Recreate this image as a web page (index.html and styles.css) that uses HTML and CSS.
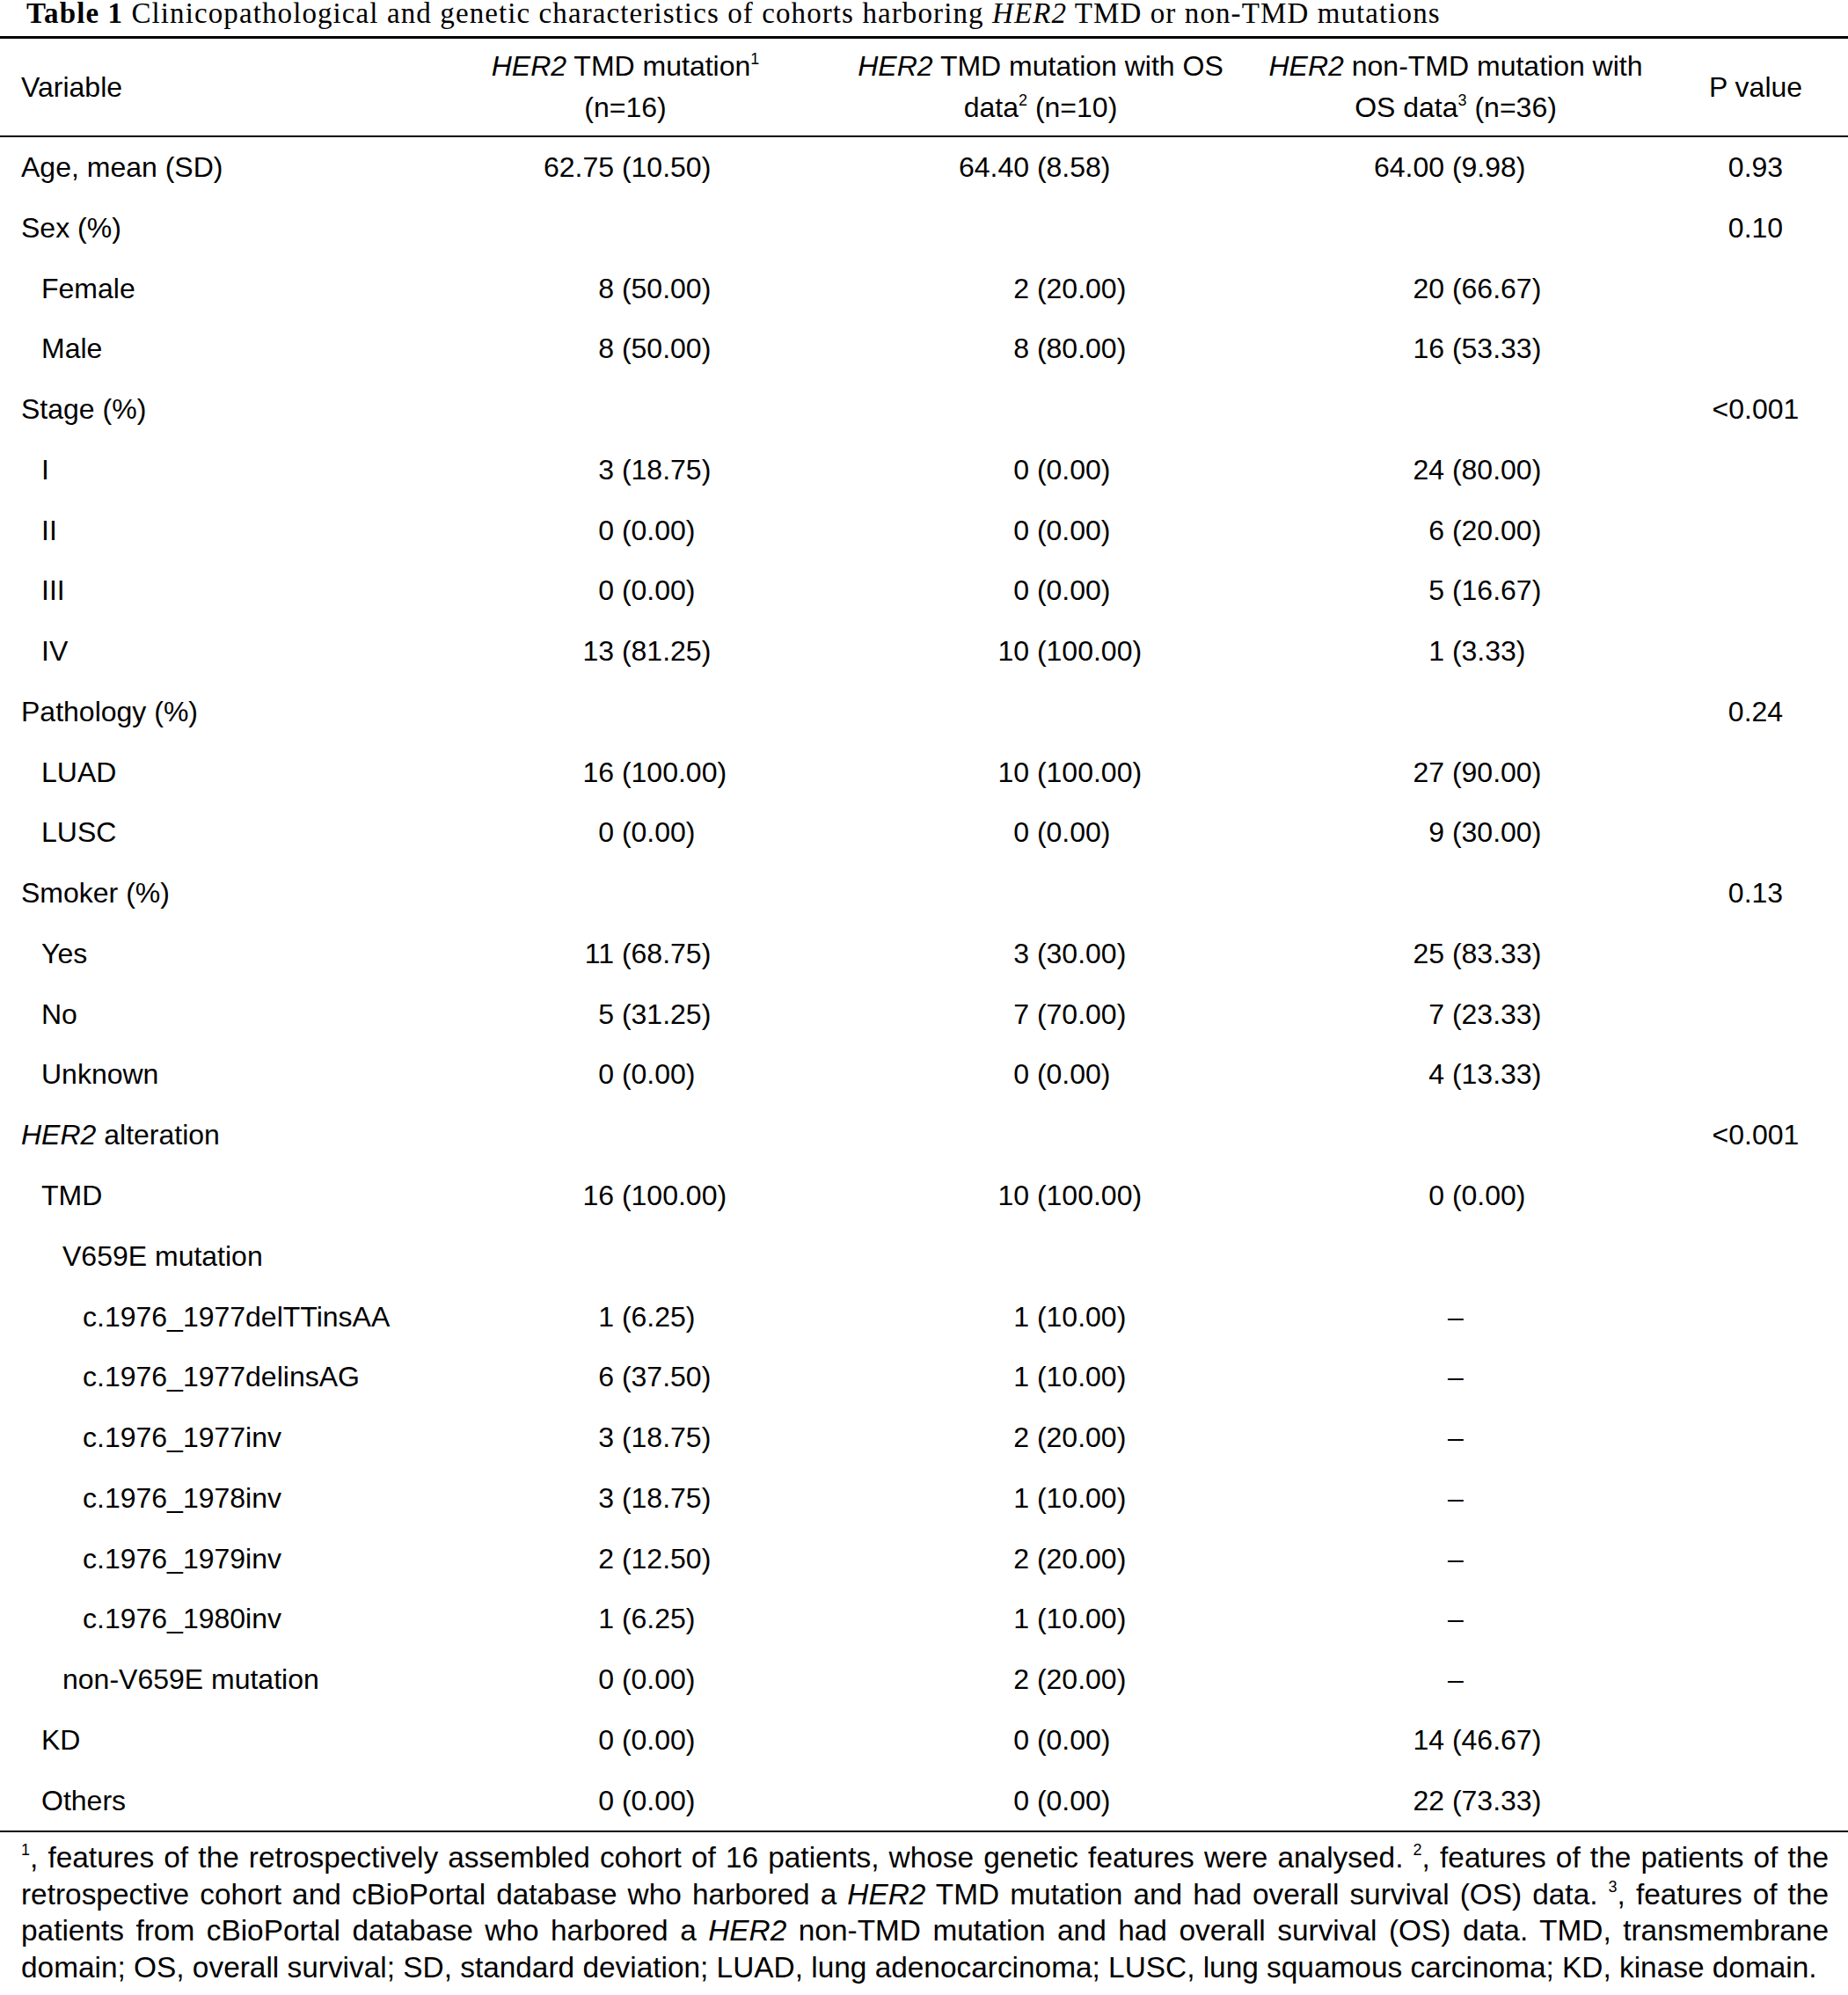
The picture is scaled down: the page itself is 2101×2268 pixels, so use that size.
FILE: index.html
```html
<!DOCTYPE html>
<html>
<head>
<meta charset="utf-8">
<link rel="stylesheet" href="styles.css">
</head>
<body>
<div class="page">
  <div class="title"><b>Table 1</b> Clinicopathological and genetic characteristics of cohorts harboring <i>HER2</i> TMD or non-TMD mutations</div>
  <div class="table">
    <div class="head">
      <div class="hc hvar">Variable</div>
      <div class="hc"><span><i>HER2</i> TMD mutation<sup>1</sup><br>(n=16)</span></div>
      <div class="hc"><span><i>HER2</i> TMD mutation with OS<br>data<sup>2</sup> (n=10)</span></div>
      <div class="hc"><span><i>HER2</i> non-TMD mutation with<br>OS data<sup>3</sup> (n=36)</span></div>
      <div class="hc"><span>P value</span></div>
    </div>
    <div class="body">
      <div class="row"><div class="lab l0">Age, mean (SD)</div><div class="val"><span class="n">62.75</span><span class="p">(10.50)</span></div><div class="val"><span class="n">64.40</span><span class="p">(8.58)</span></div><div class="val"><span class="n">64.00</span><span class="p">(9.98)</span></div><div class="pv">0.93</div></div>
      <div class="row"><div class="lab l0">Sex (%)</div><div class="val"></div><div class="val"></div><div class="val"></div><div class="pv">0.10</div></div>
      <div class="row"><div class="lab l1">Female</div><div class="val"><span class="n">8</span><span class="p">(50.00)</span></div><div class="val"><span class="n">2</span><span class="p">(20.00)</span></div><div class="val"><span class="n">20</span><span class="p">(66.67)</span></div><div class="pv"></div></div>
      <div class="row"><div class="lab l1">Male</div><div class="val"><span class="n">8</span><span class="p">(50.00)</span></div><div class="val"><span class="n">8</span><span class="p">(80.00)</span></div><div class="val"><span class="n">16</span><span class="p">(53.33)</span></div><div class="pv"></div></div>
      <div class="row"><div class="lab l0">Stage (%)</div><div class="val"></div><div class="val"></div><div class="val"></div><div class="pv">&lt;0.001</div></div>
      <div class="row"><div class="lab l1">I</div><div class="val"><span class="n">3</span><span class="p">(18.75)</span></div><div class="val"><span class="n">0</span><span class="p">(0.00)</span></div><div class="val"><span class="n">24</span><span class="p">(80.00)</span></div><div class="pv"></div></div>
      <div class="row"><div class="lab l1">II</div><div class="val"><span class="n">0</span><span class="p">(0.00)</span></div><div class="val"><span class="n">0</span><span class="p">(0.00)</span></div><div class="val"><span class="n">6</span><span class="p">(20.00)</span></div><div class="pv"></div></div>
      <div class="row"><div class="lab l1">III</div><div class="val"><span class="n">0</span><span class="p">(0.00)</span></div><div class="val"><span class="n">0</span><span class="p">(0.00)</span></div><div class="val"><span class="n">5</span><span class="p">(16.67)</span></div><div class="pv"></div></div>
      <div class="row"><div class="lab l1">IV</div><div class="val"><span class="n">13</span><span class="p">(81.25)</span></div><div class="val"><span class="n">10</span><span class="p">(100.00)</span></div><div class="val"><span class="n">1</span><span class="p">(3.33)</span></div><div class="pv"></div></div>
      <div class="row"><div class="lab l0">Pathology (%)</div><div class="val"></div><div class="val"></div><div class="val"></div><div class="pv">0.24</div></div>
      <div class="row"><div class="lab l1">LUAD</div><div class="val"><span class="n">16</span><span class="p">(100.00)</span></div><div class="val"><span class="n">10</span><span class="p">(100.00)</span></div><div class="val"><span class="n">27</span><span class="p">(90.00)</span></div><div class="pv"></div></div>
      <div class="row"><div class="lab l1">LUSC</div><div class="val"><span class="n">0</span><span class="p">(0.00)</span></div><div class="val"><span class="n">0</span><span class="p">(0.00)</span></div><div class="val"><span class="n">9</span><span class="p">(30.00)</span></div><div class="pv"></div></div>
      <div class="row"><div class="lab l0">Smoker (%)</div><div class="val"></div><div class="val"></div><div class="val"></div><div class="pv">0.13</div></div>
      <div class="row"><div class="lab l1">Yes</div><div class="val"><span class="n">11</span><span class="p">(68.75)</span></div><div class="val"><span class="n">3</span><span class="p">(30.00)</span></div><div class="val"><span class="n">25</span><span class="p">(83.33)</span></div><div class="pv"></div></div>
      <div class="row"><div class="lab l1">No</div><div class="val"><span class="n">5</span><span class="p">(31.25)</span></div><div class="val"><span class="n">7</span><span class="p">(70.00)</span></div><div class="val"><span class="n">7</span><span class="p">(23.33)</span></div><div class="pv"></div></div>
      <div class="row"><div class="lab l1">Unknown</div><div class="val"><span class="n">0</span><span class="p">(0.00)</span></div><div class="val"><span class="n">0</span><span class="p">(0.00)</span></div><div class="val"><span class="n">4</span><span class="p">(13.33)</span></div><div class="pv"></div></div>
      <div class="row"><div class="lab l0"><i>HER2</i> alteration</div><div class="val"></div><div class="val"></div><div class="val"></div><div class="pv">&lt;0.001</div></div>
      <div class="row"><div class="lab l1">TMD</div><div class="val"><span class="n">16</span><span class="p">(100.00)</span></div><div class="val"><span class="n">10</span><span class="p">(100.00)</span></div><div class="val"><span class="n">0</span><span class="p">(0.00)</span></div><div class="pv"></div></div>
      <div class="row"><div class="lab l2">V659E mutation</div><div class="val"></div><div class="val"></div><div class="val"></div><div class="pv"></div></div>
      <div class="row"><div class="lab l3">c.1976_1977delTTinsAA</div><div class="val"><span class="n">1</span><span class="p">(6.25)</span></div><div class="val"><span class="n">1</span><span class="p">(10.00)</span></div><div class="val dash">–</div><div class="pv"></div></div>
      <div class="row"><div class="lab l3">c.1976_1977delinsAG</div><div class="val"><span class="n">6</span><span class="p">(37.50)</span></div><div class="val"><span class="n">1</span><span class="p">(10.00)</span></div><div class="val dash">–</div><div class="pv"></div></div>
      <div class="row"><div class="lab l3">c.1976_1977inv</div><div class="val"><span class="n">3</span><span class="p">(18.75)</span></div><div class="val"><span class="n">2</span><span class="p">(20.00)</span></div><div class="val dash">–</div><div class="pv"></div></div>
      <div class="row"><div class="lab l3">c.1976_1978inv</div><div class="val"><span class="n">3</span><span class="p">(18.75)</span></div><div class="val"><span class="n">1</span><span class="p">(10.00)</span></div><div class="val dash">–</div><div class="pv"></div></div>
      <div class="row"><div class="lab l3">c.1976_1979inv</div><div class="val"><span class="n">2</span><span class="p">(12.50)</span></div><div class="val"><span class="n">2</span><span class="p">(20.00)</span></div><div class="val dash">–</div><div class="pv"></div></div>
      <div class="row"><div class="lab l3">c.1976_1980inv</div><div class="val"><span class="n">1</span><span class="p">(6.25)</span></div><div class="val"><span class="n">1</span><span class="p">(10.00)</span></div><div class="val dash">–</div><div class="pv"></div></div>
      <div class="row"><div class="lab l2">non-V659E mutation</div><div class="val"><span class="n">0</span><span class="p">(0.00)</span></div><div class="val"><span class="n">2</span><span class="p">(20.00)</span></div><div class="val dash">–</div><div class="pv"></div></div>
      <div class="row"><div class="lab l1">KD</div><div class="val"><span class="n">0</span><span class="p">(0.00)</span></div><div class="val"><span class="n">0</span><span class="p">(0.00)</span></div><div class="val"><span class="n">14</span><span class="p">(46.67)</span></div><div class="pv"></div></div>
      <div class="row"><div class="lab l1">Others</div><div class="val"><span class="n">0</span><span class="p">(0.00)</span></div><div class="val"><span class="n">0</span><span class="p">(0.00)</span></div><div class="val"><span class="n">22</span><span class="p">(73.33)</span></div><div class="pv"></div></div>
    </div>
  </div>
  <div class="notes">
    <span class="ln"><sup>1</sup>, features of the retrospectively assembled cohort of 16 patients, whose genetic features were analysed. <sup>2</sup>, features of the patients of the</span>
    <span class="ln">retrospective cohort and cBioPortal database who harbored a <i>HER2</i> TMD mutation and had overall survival (OS) data. <sup>3</sup>, features of the</span>
    <span class="ln">patients from cBioPortal database who harbored a <i>HER2</i> non-TMD mutation and had overall survival (OS) data. TMD, transmembrane</span>
    <span class="last">domain; OS, overall survival; SD, standard deviation; LUAD, lung adenocarcinoma; LUSC, lung squamous carcinoma; KD, kinase domain.</span>
  </div>
</div>
</body>
</html>
```

FILE: styles.css
```css
html, body {
  margin: 0;
  padding: 0;
  background: #fff;
}
.page {
  width: 2101px;
  color: #000;
  font-family: "Liberation Sans", Arial, sans-serif;
  font-size: 32px;
}
.title {
  font-family: "Liberation Serif", "Times New Roman", serif;
  font-size: 33px;
  letter-spacing: 1.1px;
  line-height: 30px;
  height: 41px;
  padding-left: 30px;
  white-space: nowrap;
}
.title b {
  font-weight: bold;
}
.table {
  border-top: 3px solid #000;
}
.head {
  display: grid;
  grid-template-columns: 475px 472px 472px 472px 1fr;
  border-bottom: 2px solid #000;
  height: 110px;
  align-items: center;
}
.hc {
  line-height: 47px;
  text-align: center;
}
.hc.hvar {
  text-align: left;
  padding-left: 24px;
}
sup {
  font-size: 18px;
  line-height: 0;
  vertical-align: 13px;
}
.row {
  display: grid;
  grid-template-columns: 475px 472px 472px 472px 1fr;
  height: 68.77px;
  line-height: 68.77px;
  white-space: nowrap;
}
.lab.l0 { padding-left: 24px; }
.lab.l1 { padding-left: 47px; }
.lab.l2 { padding-left: 71px; }
.lab.l3 { padding-left: 94px; }
.val {
  display: flex;
}
.val .n {
  width: 223px;
  text-align: right;
}
.val .p {
  margin-left: 0.278em;
}
.val.dash {
  justify-content: center;
}
.pv {
  text-align: center;
}
.body {
  border-bottom: 2px solid #000;
}
.notes {
  padding: 8px 22px 0 24px;
  font-size: 33.4px;
  line-height: 41.5px;
}
.notes .ln {
  display: block;
  text-align: justify;
  text-align-last: justify;
}
.notes .last {
  display: block;
  white-space: nowrap;
}
.notes sup {
  font-size: 18px;
  vertical-align: 14px;
}
```
